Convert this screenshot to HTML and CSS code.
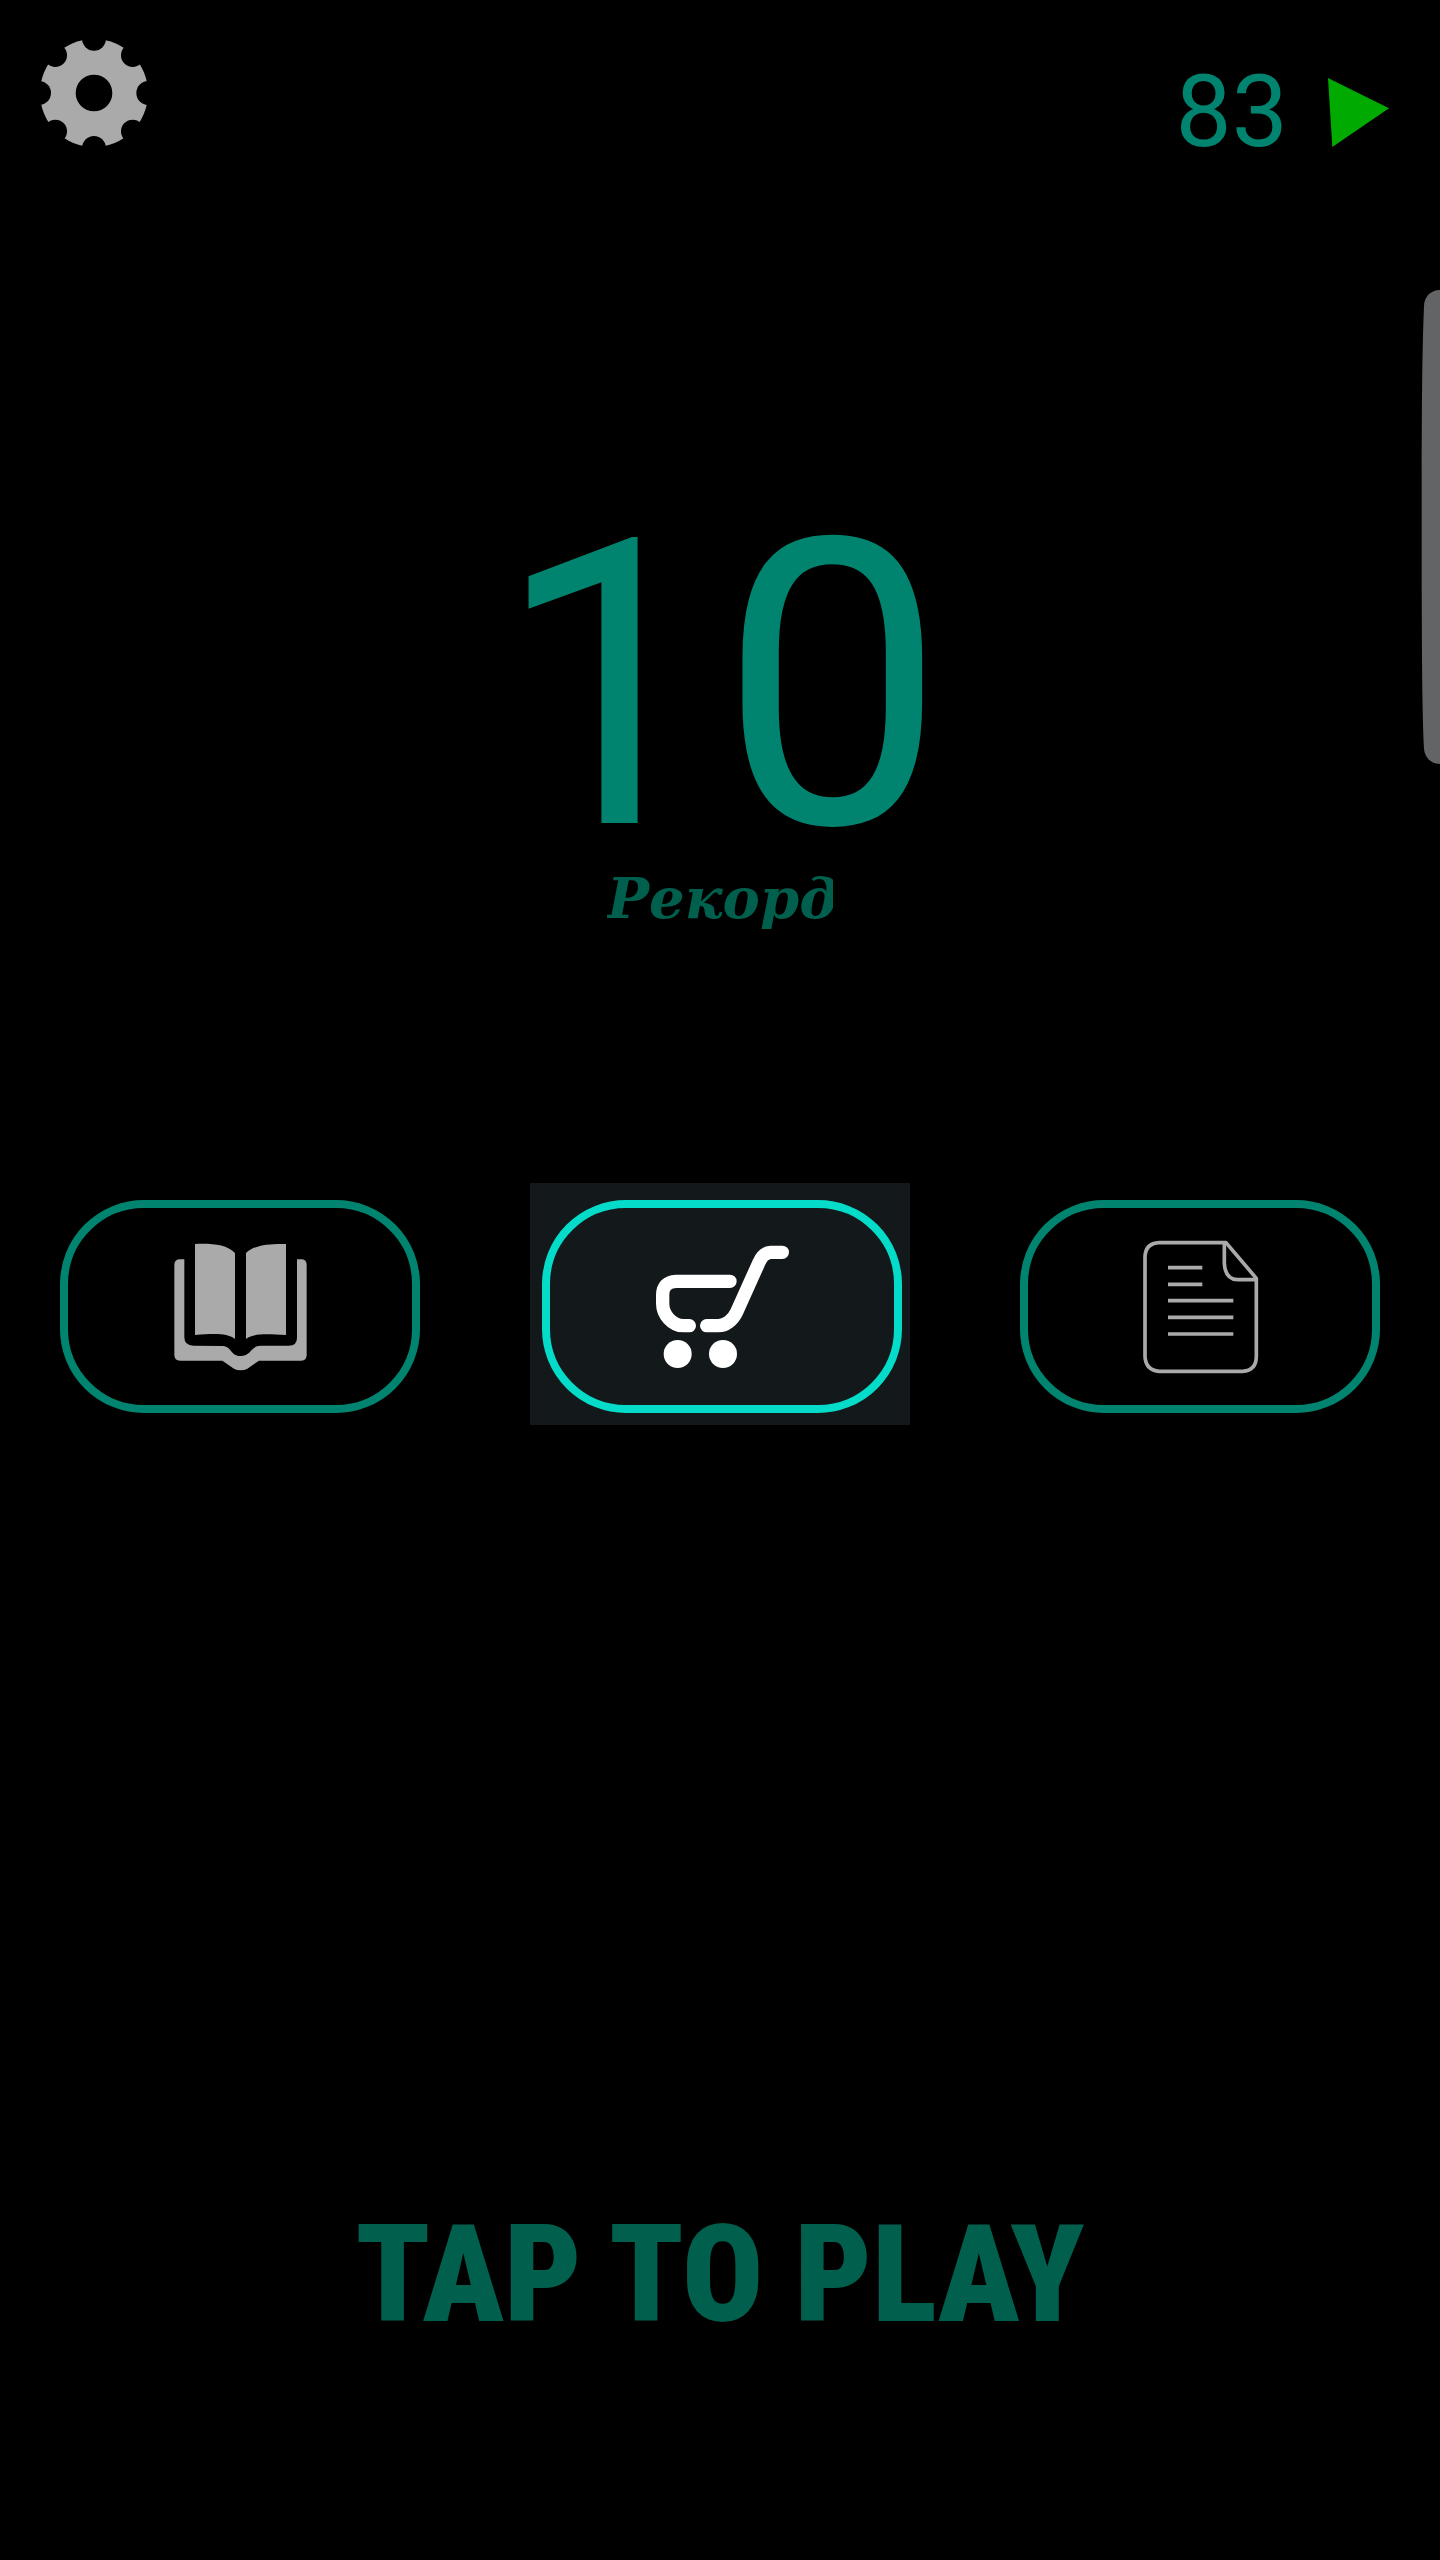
FILE: index.html
```html
<!DOCTYPE html>
<html lang="ru">
<head>
  <meta charset="utf-8">
  <meta name="viewport" content="width=device-width, initial-scale=1">
  <title>Tap to play</title>
  <link rel="stylesheet" href="styles.css">
</head>
<body>
  <div class="screen">
    <header class="topbar">
      <button class="settings" type="button" aria-label="Настройки">
        <svg class="settings-icon" viewBox="59 57 324 324" aria-hidden="true">
          <mask id="gear-cuts">
            <rect x="59" y="57" width="324" height="324" fill="#fff"/>
            <circle cx="221" cy="219" r="55"/>
            <circle cx="221" cy="56" r="36"/>
            <circle cx="337" cy="106" r="35"/>
            <circle cx="384" cy="219" r="36"/>
            <circle cx="337" cy="334" r="35"/>
            <circle cx="221" cy="384" r="36"/>
            <circle cx="105" cy="334" r="35"/>
            <circle cx="56" cy="219" r="36"/>
            <circle cx="105" cy="106" r="35"/>
          </mask>
          <circle cx="221" cy="219" r="162" fill="currentColor" mask="url(#gear-cuts)"/>
        </svg>
      </button>
      <div class="wallet">
        <span class="wallet-count">83</span>
        <svg class="wallet-icon" viewBox="504 81 183 207" aria-hidden="true">
          <path d="M504 81 687 172 517 288Z" fill="currentColor"/>
        </svg>
      </div>
    </header>

    <main class="content">
      <section class="record">
        <p class="record-value">10</p>
        <h1 class="record-label">Рекорд</h1>
      </section>

      <nav class="menu">
        <div class="menu-slot">
          <button class="menu-button" type="button" aria-label="Правила">
            <svg class="menu-icon" viewBox="369 179 402 402" fill="currentColor" aria-hidden="true">
              <path d="M435 191C485 189 530 192 555 218V476C530 458 495 460 435 464Z"/>
              <path d="M708 191C658 190 615 193 588 218V476C612 458 650 461 708 464Z"/>
              <path d="M403 237H390Q373 237 373 254V524Q373 541 390 541H517L552 565Q560 570 571 570Q584 570 592 565L627 541H754Q770 541 770 524V254Q770 237 754 237H741V472Q741 496 716 496H632C602 496 604 527 571 527C540 527 546 497 516 497L430 496Q403 496 403 470Z"/>
            </svg>
          </button>
        </div>
        <div class="menu-slot menu-slot-active">
          <button class="menu-button" type="button" aria-label="Магазин">
            <svg class="menu-icon" viewBox="405 209 402 402" aria-hidden="true">
              <g fill="none" stroke="currentColor" stroke-width="40" stroke-linecap="round">
                <path d="M630 333H468Q428 335 428 374V400C428 432 456 466 490 466H508"/>
                <path d="M787 246H752C735 247 724 260 717 276L650 425C639 449 617 466 595 466H560"/>
              </g>
              <circle cx="473" cy="551" r="42" fill="currentColor"/>
              <circle cx="609" cy="551" r="42" fill="currentColor"/>
            </svg>
          </button>
        </div>
        <div class="menu-slot">
          <button class="menu-button" type="button" aria-label="Задания">
            <svg class="menu-icon" viewBox="399 179 402 402" fill="none" stroke="currentColor" stroke-width="11" aria-hidden="true">
              <path d="M678 187H478Q435 189 435 232V528Q437 570 478 573H728Q769 571 769 528V294Z" stroke-linejoin="round"/>
              <path d="M673 187V250Q676 297 712 298H769"/>
              <path d="M504 262H607M504 312H607M504 361H700M504 411H700M504 461H700"/>
            </svg>
          </button>
        </div>
      </nav>

      <button class="play" type="button">TAP TO PLAY</button>
    </main>

    <svg class="edge-handle" viewBox="120 60 60 1422" aria-hidden="true">
      <path d="M180 60C152 60 132 80 132 110C126 250 126 400 125 600V940C126 1140 126 1300 132 1436C134 1462 154 1482 180 1482Z" fill="currentColor"/>
    </svg>
  </div>
</body>
</html>
```
FILE: styles.css
```css
* {
  box-sizing: border-box;
}

body {
  margin: 0;
  background: #000;
  color: #008470;
  font-family: Roboto, sans-serif;
}

button {
  padding: 0;
  border: 0;
  background: none;
  color: inherit;
  font: inherit;
  cursor: pointer;
}

.screen {
  position: relative;
  display: flex;
  flex-direction: column;
  min-height: 100vh;
  overflow: hidden;
}

.topbar {
  display: flex;
  justify-content: space-between;
  align-items: flex-start;
  padding: 39px 51px 0 40px;
}

.settings {
  color: #aaa;
}

.settings-icon {
  display: block;
  width: 108px;
  height: 108px;
}

.wallet {
  display: flex;
  align-items: center;
  gap: 40px;
  padding-top: 23px;
}

.wallet-count {
  font-size: 100px;
  line-height: 100px;
}

.wallet-icon {
  width: 61px;
  height: 69px;
  color: #00aa00;
}

.content {
  display: flex;
  flex-direction: column;
  align-items: center;
  padding-top: 345px;
}

.record {
  display: flex;
  flex-direction: column;
  align-items: center;
}

.record-value {
  margin: 0;
  font-size: 400px;
  line-height: 360px;
}

.record-label {
  width: 226px;
  margin: 0;
  overflow: hidden;
  color: #005f4d;
  font: italic bold 56px/62px "DejaVu Serif", serif;
}

.menu {
  display: grid;
  grid-template-columns: repeat(3, 1fr);
  gap: 100px;
  width: 100%;
  margin-top: 254px;
  padding: 0 50px;
}

.menu-slot {
  padding: 17px 10px 12px;
  color: #aaa;
}

.menu-slot-active {
  padding: 17px 8px 12px 12px;
  background: #13181b;
  color: #fff;
}

.menu-button {
  display: flex;
  justify-content: center;
  align-items: center;
  width: 100%;
  height: 213px;
  border: 8px solid #008470;
  border-radius: 84px;
}

.menu-slot-active .menu-button {
  border-color: #04dbc8;
}

.menu-icon {
  width: 134px;
  height: 134px;
}

.play {
  margin-top: 780px;
  color: #005f4d;
  font: 900 135px/140px "Roboto Condensed", Roboto, sans-serif;
}

.edge-handle {
  position: absolute;
  top: 290px;
  right: 0;
  width: 20px;
  height: 474px;
  color: #626466;
}
```
